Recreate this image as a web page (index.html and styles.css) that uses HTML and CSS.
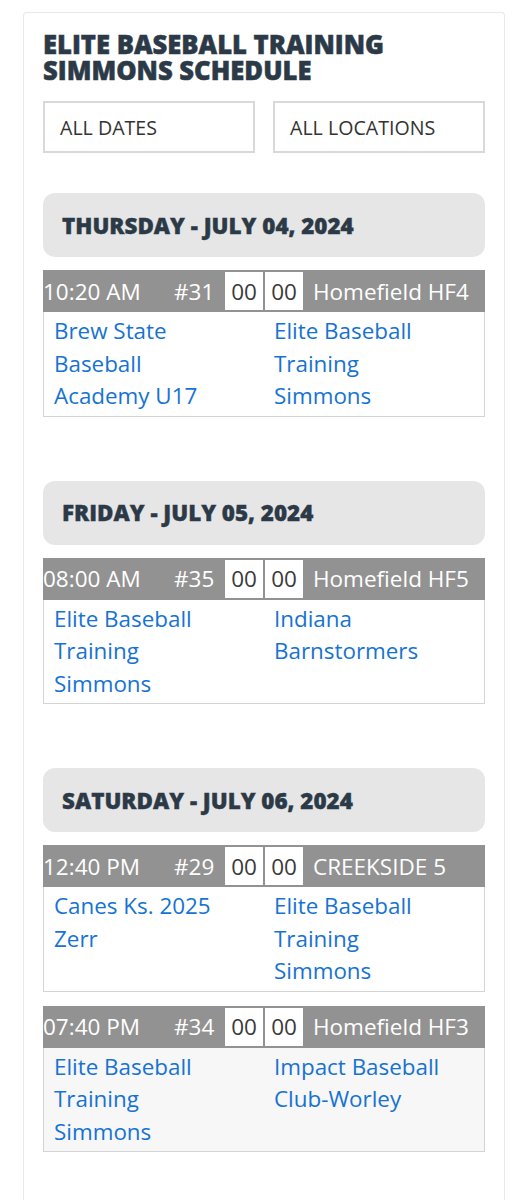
FILE: index.html
```html
<!DOCTYPE html>
<html lang="en">
<head>
<meta charset="utf-8">
<title>Elite Baseball Training Simmons Schedule</title>
<link rel="stylesheet" href="styles.css">
</head>
<body>
<div class="card">
  <h1 class="title">ELITE BASEBALL TRAINING SIMMONS SCHEDULE</h1>
  <div class="filters">
    <div class="select">ALL DATES</div>
    <div class="select">ALL LOCATIONS</div>
  </div>

  <section class="day">
    <div class="day-head">THURSDAY - JULY 04, 2024</div>
    <div class="game">
      <div class="game-head">
        <span class="time">10:20 AM</span>
        <span class="num">#31</span>
        <span class="score">00</span>
        <span class="score">00</span>
        <span class="loc">Homefield HF4</span>
      </div>
      <div class="teams">
        <a class="team" href="#">Brew State Baseball Academy U17</a>
        <a class="team" href="#">Elite Baseball Training Simmons</a>
      </div>
    </div>
  </section>

  <section class="day">
    <div class="day-head">FRIDAY - JULY 05, 2024</div>
    <div class="game">
      <div class="game-head">
        <span class="time">08:00 AM</span>
        <span class="num">#35</span>
        <span class="score">00</span>
        <span class="score">00</span>
        <span class="loc">Homefield HF5</span>
      </div>
      <div class="teams">
        <a class="team" href="#">Elite Baseball Training Simmons</a>
        <a class="team" href="#">Indiana Barnstormers</a>
      </div>
    </div>
  </section>

  <section class="day">
    <div class="day-head">SATURDAY - JULY 06, 2024</div>
    <div class="game">
      <div class="game-head">
        <span class="time">12:40 PM</span>
        <span class="num">#29</span>
        <span class="score">00</span>
        <span class="score">00</span>
        <span class="loc">CREEKSIDE 5</span>
      </div>
      <div class="teams">
        <a class="team" href="#">Canes Ks. 2025 Zerr</a>
        <a class="team" href="#">Elite Baseball Training Simmons</a>
      </div>
    </div>
    <div class="game">
      <div class="game-head">
        <span class="time">07:40 PM</span>
        <span class="num">#34</span>
        <span class="score">00</span>
        <span class="score">00</span>
        <span class="loc">Homefield HF3</span>
      </div>
      <div class="teams alt">
        <a class="team" href="#">Elite Baseball Training Simmons</a>
        <a class="team" href="#">Impact Baseball Club-Worley</a>
      </div>
    </div>
  </section>
</div>
</body>
</html>
```

FILE: styles.css
```css
* { box-sizing: border-box; }

body {
  margin: 0;
  background: #ffffff;
  font-family: "Open Sans", "Liberation Sans", sans-serif;
}

.card {
  width: 482px;
  margin: 12px 0 0 23px;
  min-height: 1200px;
  border: 1px solid #e8e8e8;
  border-bottom: none;
  border-radius: 4px 4px 0 0;
  padding: 19px 19px 0 19px;
}

.title {
  margin: 0;
  font-size: 25.6px;
  line-height: 26px;
  font-weight: 800;
  color: #2c3a47;
  -webkit-text-stroke: 0.5px #2c3a47;
}

.filters {
  display: flex;
  gap: 18px;
  margin-top: 17px;
}

.select {
  flex: 1;
  height: 52px;
  border: 2px solid #d9d9d9;
  display: flex;
  align-items: center;
  padding-left: 15px;
  font-size: 19.6px;
  color: #333;
}

.day {
  margin-top: 40px;
}
.day + .day {
  margin-top: 64px;
}

.day-head {
  height: 64px;
  background: #e6e6e6;
  border-radius: 12px;
  display: flex;
  align-items: center;
  padding-left: 19px;
  font-size: 22.4px;
  font-weight: 800;
  color: #2c3a47;
  -webkit-text-stroke: 0.4px #2c3a47;
}

.game {
  margin-top: 13px;
}
.game + .game {
  margin-top: 14px;
}

.game-head {
  height: 42px;
  background: #929292;
  display: flex;
  align-items: center;
  color: #ffffff;
  font-size: 22.5px;
  white-space: nowrap;
}

.time {
  width: 131px;
}
.num {
  width: 51px;
}
.score {
  width: 38px;
  height: 38px;
  background: #ffffff;
  color: #3a3a3a;
  display: flex;
  align-items: center;
  justify-content: center;
  margin-right: 2px;
}
.loc {
  padding-left: 8px;
}

.teams {
  display: grid;
  grid-template-columns: 1fr 1fr;
  border: 1px solid #d4d4d4;
  border-top: none;
  padding: 3px 0 3px;
  background: #ffffff;
}
.teams.alt {
  background: #f7f7f7;
}

.team {
  padding-left: 10px;
  padding-right: 36px;
  font-size: 22.4px;
  line-height: 32.5px;
  color: #1673d3;
  text-decoration: none;
}
```
